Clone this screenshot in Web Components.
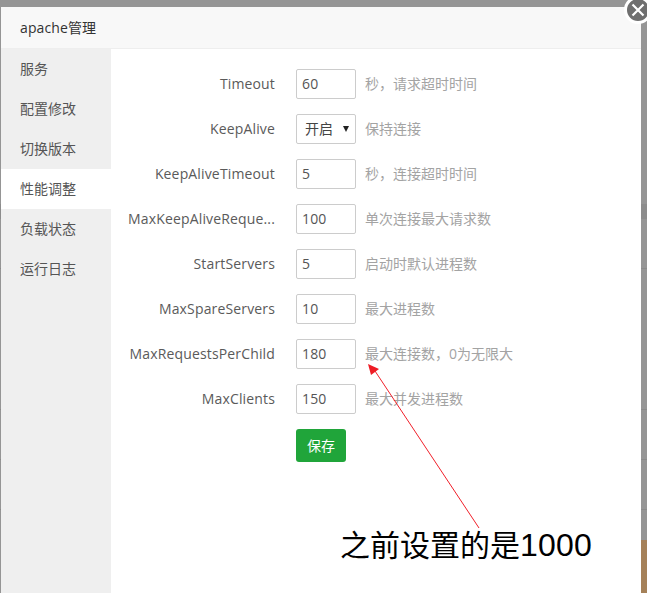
<!DOCTYPE html>
<html>
<head>
<meta charset="utf-8">
<title>apache管理</title>
<style>
    html, body { margin: 0; height: 100%; }
    body { overflow: hidden; }
</style>
</head>
<body>
<apache-layer title-text="apache管理" active="性能调整">
    <form-row label="Timeout" value="60" hint="秒，请求超时时间"></form-row>
    <form-row label="KeepAlive" value="开启" hint="保持连接" type="select"></form-row>
    <form-row label="KeepAliveTimeout" value="5" hint="秒，连接超时时间"></form-row>
    <form-row label="MaxKeepAliveReque..." value="100" hint="单次连接最大请求数"></form-row>
    <form-row label="StartServers" value="5" hint="启动时默认进程数"></form-row>
    <form-row label="MaxSpareServers" value="10" hint="最大进程数"></form-row>
    <form-row label="MaxRequestsPerChild" value="180" hint="最大连接数，0为无限大"></form-row>
    <form-row label="MaxClients" value="150" hint="最大并发进程数"></form-row>
    <save-button>保存</save-button>
</apache-layer>
<script>
const FONT = '"Open Sans", "Noto Sans CJK SC", sans-serif';

class ApacheLayer extends HTMLElement {
    connectedCallback() {
        const menu = ['服务', '配置修改', '切换版本', '性能调整', '负载状态', '运行日志'];
        const active = this.getAttribute('active');
        this.attachShadow({ mode: 'open' });
        this.shadowRoot.innerHTML = `
            <style>
                :host {
                    display: block;
                    position: relative;
                    height: 593px;
                    box-sizing: border-box;
                    padding: 7px 6px 0 1px;
                    overflow: hidden;
                    font-family: ${FONT};
                    background:
                        linear-gradient(#a58159, #a58159) 641px 540px / 6px 53px no-repeat,
                        linear-gradient(#8c8c8c, #8c8c8c) 0 204px / 100% 15px no-repeat,
                        linear-gradient(#8a8a8a, #8a8a8a) 0 268px / 100% 1px no-repeat,
                        linear-gradient(#8a8a8a, #8a8a8a) 0 409px / 100% 1px no-repeat,
                        linear-gradient(#8a8a8a, #8a8a8a) 0 459px / 100% 1px no-repeat,
                        linear-gradient(#8a8a8a, #8a8a8a) 0 509px / 100% 1px no-repeat,
                        #959595;
                }
                .box {
                    display: flex;
                    flex-direction: column;
                    height: 100%;
                    background: #fff;
                }
                .title {
                    height: 41px;
                    line-height: 42px;
                    padding-left: 19px;
                    flex: none;
                    background: #f8f8f8;
                    border-bottom: 1px solid #eee;
                    font-size: 14px;
                    letter-spacing: 0.1px;
                    color: #333;
                }
                .body { display: flex; flex: 1; }
                .menu {
                    width: 110px;
                    flex: none;
                    background: #efefef;
                    list-style: none;
                    margin: 0;
                    padding: 0;
                }
                .menu li {
                    height: 40px;
                    line-height: 39px;
                    padding-left: 19px;
                    font-size: 14px;
                    color: #555;
                }
                .menu li.on { background: #fff; }
                .content {
                    flex: 1;
                    padding-top: 20px;
                    display: flex;
                    flex-direction: column;
                    gap: 15px;
                }
                .close {
                    position: absolute;
                    top: -4px;
                    left: 624px;
                    width: 22px;
                    height: 22px;
                    border: 3px solid #fff;
                    border-radius: 50%;
                    background: #6f6f6f;
                }
                .close svg { display: block; }
            </style>
            <div class="box">
                <div class="title">${this.getAttribute('title-text')}</div>
                <div class="body">
                    <ul class="menu">
                        ${menu.map(m => `<li class="${m === active ? 'on' : ''}">${m}</li>`).join('')}
                    </ul>
                    <div class="content"><slot></slot></div>
                </div>
            </div>
            <div class="close">
                <svg width="22" height="22" viewBox="0 0 22 22">
                    <path d="M5.5 5.5 16.5 16.5M16.5 5.5 5.5 16.5" stroke="#fff" stroke-width="2.2" fill="none"/>
                </svg>
            </div>
            <note-arrow></note-arrow>
        `;
    }
}

class FormRow extends HTMLElement {
    connectedCallback() {
        const isSelect = this.getAttribute('type') === 'select';
        const value = this.getAttribute('value');
        this.attachShadow({ mode: 'open' });
        this.shadowRoot.innerHTML = `
            <style>
                :host {
                    display: flex;
                    align-items: center;
                    height: 30px;
                    padding-left: 15px;
                }
                .label {
                    box-sizing: border-box;
                    width: 150px;
                    margin-right: 20px;
                    padding-right: 1px;
                    padding-bottom: 1px;
                    text-align: right;
                    font-size: 14px;
                    letter-spacing: 0.15px;
                    color: #5a5a5a;
                    white-space: nowrap;
                }
                .field {
                    display: flex;
                    align-items: center;
                    justify-content: space-between;
                    box-sizing: border-box;
                    width: 60px;
                    height: 30px;
                    padding: 0 5px 2px;
                    margin-right: 9px;
                    border: 1px solid #ccc;
                    border-radius: 2px;
                    background: #fff;
                    font-size: 14px;
                    letter-spacing: 0.15px;
                    color: #555;
                }
                .field.select { padding: 0 6px 2px 8px; color: #444; letter-spacing: 0; }
                .caret {
                    width: 0;
                    height: 0;
                    margin-top: 2px;
                    border: 3.5px solid transparent;
                    border-top: 6px solid #222;
                    border-bottom: 0;
                }
                .hint { padding-bottom: 2px; font-size: 14px; color: #a3a3a3; white-space: nowrap; }
            </style>
            <div class="label">${this.getAttribute('label')}</div>
            <div class="field ${isSelect ? 'select' : ''}">
                <span>${value}</span>${isSelect ? '<span class="caret"></span>' : ''}
            </div>
            <div class="hint">${this.getAttribute('hint')}</div>
        `;
    }
}

class SaveButton extends HTMLElement {
    connectedCallback() {
        this.attachShadow({ mode: 'open' });
        this.shadowRoot.innerHTML = `
            <style>
                :host {
                    display: flex;
                    align-items: center;
                    justify-content: center;
                    box-sizing: border-box;
                    width: 50px;
                    height: 33px;
                    margin-left: 185px;
                    padding-bottom: 2px;
                    border-radius: 3px;
                    background: #20a53a;
                    color: #fff;
                    font-size: 14px;
                }
            </style>
            <slot></slot>
        `;
    }
}

// red arrow and caption drawn on top of the screenshot
class NoteArrow extends HTMLElement {
    connectedCallback() {
        this.attachShadow({ mode: 'open' });
        this.shadowRoot.innerHTML = `
            <style>
                :host { display: block; position: absolute; left: 0; top: 0; width: 647px; height: 593px; pointer-events: none; }
                svg { position: absolute; left: 0; top: 0; }
                .text {
                    position: absolute;
                    left: 340px;
                    top: 521px;
                    font-family: "Noto Sans CJK SC", sans-serif;
                    font-size: 30px;
                    line-height: 44px;
                    color: #000;
                    white-space: nowrap;
                }
                .num { font-family: "Liberation Sans", sans-serif; font-size: 32px; letter-spacing: 0.2px; }
            </style>
            <svg width="647" height="593" viewBox="0 0 647 593">
                <path d="M479 528 375 371" stroke="#f0202a" stroke-width="1" fill="none"/>
                <path d="M368 364 379 369 371 375Z" fill="#ee1c25"/>
            </svg>
            <div class="text">之前设置的是<span class="num">1000</span></div>
        `;
    }
}

customElements.define('apache-layer', ApacheLayer);
customElements.define('form-row', FormRow);
customElements.define('save-button', SaveButton);
customElements.define('note-arrow', NoteArrow);
</script>
</body>
</html>
